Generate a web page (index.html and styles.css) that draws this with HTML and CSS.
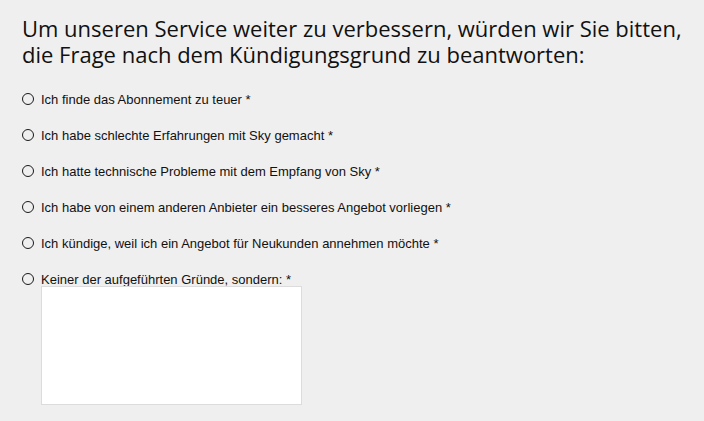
FILE: index.html
```html
<!DOCTYPE html>
<html lang="de">
<head>
<meta charset="utf-8">
<link rel="stylesheet" href="styles.css">
</head>
<body>
<main class="page">
  <h1 class="title">Um unseren Service weiter zu verbessern, würden wir Sie bitten, die Frage nach dem Kündigungsgrund zu beantworten:</h1>
  <form class="options">
    <label class="option"><input type="radio" name="grund" class="radio"><span>Ich finde das Abonnement zu teuer *</span></label>
    <label class="option"><input type="radio" name="grund" class="radio"><span>Ich habe schlechte Erfahrungen mit Sky gemacht *</span></label>
    <label class="option"><input type="radio" name="grund" class="radio"><span>Ich hatte technische Probleme mit dem Empfang von Sky *</span></label>
    <label class="option"><input type="radio" name="grund" class="radio"><span>Ich habe von einem anderen Anbieter ein besseres Angebot vorliegen *</span></label>
    <label class="option"><input type="radio" name="grund" class="radio"><span>Ich kündige, weil ich ein Angebot für Neukunden annehmen möchte *</span></label>
    <div class="option-other">
      <label class="option"><input type="radio" name="grund" class="radio"><span>Keiner der aufgeführten Gründe, sondern: *</span></label>
      <textarea class="other-text"></textarea>
    </div>
  </form>
</main>
</body>
</html>
```
FILE: styles.css
```css
html, body {
  margin: 0;
  padding: 0;
  background: #efefef;
}
.page {
  padding: 15px 0 0 22px;
}
.title {
  margin: 0;
  font-family: "Open Sans", sans-serif;
  font-weight: 400;
  font-size: 22px;
  line-height: 26px;
  color: #111;
  width: 680px;
}
.options {
  display: flex;
  flex-direction: column;
  gap: 20px;
  margin-top: 24px;
}
.option {
  display: flex;
  align-items: center;
  height: 16px;
  font-family: "Liberation Sans", Arial, sans-serif;
  font-size: 13px;
  color: #111;
}
.radio {
  appearance: none;
  -webkit-appearance: none;
  margin: 0 7px 0 0;
  width: 12px;
  height: 12px;
  border: 1px solid #1a1a1a;
  border-radius: 50%;
  background: transparent;
  box-sizing: border-box;
}
.option-other {
  display: flex;
  flex-direction: column;
}
.other-text {
  margin: -1px 0 0 19px;
  width: 261px;
  height: 119px;
  box-sizing: border-box;
  border: 1px solid #dcdcdc;
  background: #fff;
  resize: none;
  padding: 0;
}
```
